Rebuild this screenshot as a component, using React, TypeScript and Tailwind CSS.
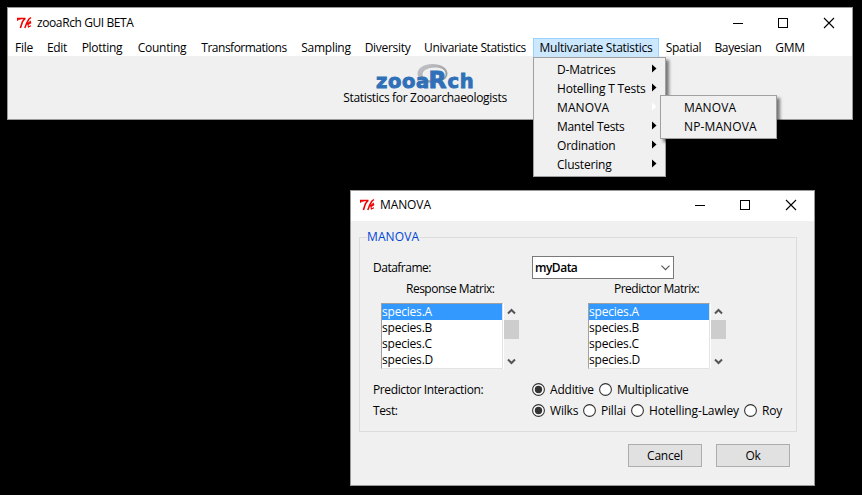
import { type ReactNode } from "react";

function TkIcon() {
  return (
    <svg width="16" height="14" viewBox="0 0 16 14" fill="none" stroke="#f00000" className="block shrink-0">
      <path d="M.6 4.800V2.400M0 2.500h8.500M1 3.200h2.500" strokeWidth="1.300" />
      <path d="M7.900 2.500L5.400 5.800L3.400 12" strokeWidth="1.600" />
      <path d="M13.900 1.500L11.800 3.300L9.800 6.800L7.800 12" strokeWidth="1.500" />
      <path d="M9.600 8.200L13.400 5.500L13.700 7L11 8.500L11.400 11L14 9.800" strokeWidth="1.100" />
    </svg>
  );
}

function Controls() {
  return (
    <svg width="102" height="12" viewBox="0 0 102 12" fill="none" stroke="#000" className="block shrink-0">
      <path d="M0 6.5h10" shapeRendering="crispEdges" />
      <path d="M45.5 1.5h9v9h-9z" shapeRendering="crispEdges" />
      <path d="M91 1l10 10M101 1l-10 10" strokeWidth="1.1" />
    </svg>
  );
}

function TitleBar({ title, className, titleClass }: { title: string; className: string; titleClass: string }) {
  return (
    <div className={`flex items-center justify-between bg-white pl-[9px] ${className}`}>
      <div className="flex items-center gap-[4px]">
        <TkIcon />
        <span className={titleClass}>{title}</span>
      </div>
      <Controls />
    </div>
  );
}

const menus = [
  { label: "File", width: "w-[32px]" },
  { label: "Edit", width: "w-[34px]" },
  { label: "Plotting", width: "w-[56px]" },
  { label: "Counting", width: "w-[64px]" },
  { label: "Transformations", width: "w-[100px] tracking-[-0.5px]" },
  { label: "Sampling", width: "w-[64px]" },
  { label: "Diversity", width: "w-[59px] tracking-[-0.3px]" },
  { label: "Univariate Statistics", width: "w-[116px] tracking-[-0.38px]" },
  { label: "Multivariate Statistics", width: "w-[126px]" },
  { label: "Spatial", width: "w-[49px]" },
  { label: "Bayesian", width: "w-[60px] tracking-[-0.35px]" },
  { label: "GMM", width: "w-[44px]" },
];

function Logo() {
  return (
    <svg width="100" height="26" viewBox="0 0 100 26" className="block overflow-visible">
      <defs>
        <linearGradient id="ring" x1="0" y1="0" x2="1" y2="1">
          <stop offset="0" stopColor="#c9cacc" />
          <stop offset="1" stopColor="#8c8d91" />
        </linearGradient>
      </defs>
      <path
        fillRule="evenodd"
        fill="url(#ring)"
        d="M57.5 1C66 1 72.500 5 72.500 10.500S66 20 57.500 20S42.500 16 42.500 10.500S49 1 57.500 1ZM60 4.500C52.500 4.500 47.500 7.500 47.500 11.500S52.500 17.500 60 17.500S70.500 15 70.500 11S67 4.500 60 4.500Z"
      />
      <text y="24.500" fill="#2f70b8" stroke="#2f70b8" strokeWidth="0.9" fontFamily="'DejaVu Sans', sans-serif" fontWeight="700" fontSize="19.500" letterSpacing="0.6">
        <tspan x="1">zooa</tspan>
        <tspan x="53.500" fontSize="23.500">R</tspan>
        <tspan x="72.500">ch</tspan>
      </text>
    </svg>
  );
}

function MainWindow() {
  return (
    <section className="absolute left-[7px] top-[7px] flex h-[113px] w-[846px] flex-col border border-[#999] bg-[#f0f0f0]">
      <TitleBar title="zooaRch GUI BETA" titleClass="tracking-[-0.4px]" className="h-[30px] pr-[17px]" />
      <nav className="flex h-[18px] shrink-0 bg-white tracking-[-0.28px]">
        {menus.map((m) => (
          <div
            key={m.label}
            className={`flex shrink-0 items-center justify-center ${m.width} ${
              m.label === "Multivariate Statistics" ? "h-[20px] border border-[#99d1ff] bg-[#cce8ff]" : "h-[20px]"
            }`}
          >
            {m.label}
          </div>
        ))}
      </nav>
      <div className="flex flex-col items-center pr-[10px] pt-[7px]">
        <Logo />
        <div className="mt-px h-4 leading-4 tracking-[-0.32px]">Statistics for Zooarchaeologists</div>
      </div>
    </section>
  );
}

const submenu = ["D-Matrices", "Hotelling T Tests", "MANOVA", "Mantel Tests", "Ordination", "Clustering"];

function Menus() {
  return (
    <>
      <div className="absolute left-[533px] top-[57px] flex h-[120px] w-[133px] flex-col border border-[#a0a0a0] bg-[#f0f0f0] pt-[2px] shadow-[3px_3px_3px_rgba(0,0,0,0.5)]">
        {submenu.map((s) => (
          <div key={s} className="flex h-[19px] items-center justify-between pl-[23px] pr-[8px]">
            <span className={s === "MANOVA" ? "tracking-[0.1px]" : s === "Mantel Tests" ? "tracking-[-0.3px]" : ""}>{s}</span>
            <svg width="5" height="9" viewBox="0 0 5 9" className="mb-[3px] block">
              <path d="M0 .5L4.500 4.500L0 8.500z" fill={s === "MANOVA" ? "#fff" : "#000"} />
            </svg>
          </div>
        ))}
      </div>
      <div className="absolute left-[660px] top-[95px] flex h-[44px] w-[117px] flex-col border border-[#a0a0a0] bg-[#f0f0f0] pl-[23px] pt-[2px] tracking-[0.12px] shadow-[3px_3px_3px_rgba(0,0,0,0.5)]">
        <div className="flex h-[19px] items-center">MANOVA</div>
        <div className="flex h-[19px] items-center">NP-MANOVA</div>
      </div>
    </>
  );
}

function Chevron({ up = false }: { up?: boolean }) {
  return (
    <svg width="9" height="7" viewBox="0 0 9 7" fill="none" stroke="#555" strokeWidth="2" className="block">
      <path d={up ? "M1 5.500L4.500 2L8 5.500" : "M1 1.500L4.500 5L8 1.500"} />
    </svg>
  );
}

function ListBox() {
  return (
    <div className="flex h-[66px]">
      <ul className="h-[66px] w-[122px] border-b border-l border-r border-t border-b-[#e3e3e3] border-l-[#a0a0a0] border-r-[#e3e3e3] border-t-[#a0a0a0] bg-white">
        {["A", "B", "C", "D"].map((k) => (
          <li key={k} className={`h-4 leading-[15px] ${k === "A" ? "bg-[#3399ff] text-white" : ""}`}>
            species.{k}
          </li>
        ))}
      </ul>
      <div className="w-px bg-white" />
      <div className="flex w-[15px] flex-col items-center justify-between pb-[4px] pt-[5px]">
        <Chevron up />
        <div className="mb-auto mt-[5px] h-[19px] w-[15px] shrink-0 bg-[#cdcdcd]" />
        <Chevron />
      </div>
    </div>
  );
}

function Radio({ label, checked = false, className }: { label: string; checked?: boolean; className: string }) {
  return (
    <label className={`flex shrink-0 items-center gap-[5px] ${className}`}>
      <svg width="13" height="13" viewBox="0 0 13 13" className="block shrink-0">
        <circle cx="6.500" cy="6.500" r="5.900" fill="#fff" stroke="#333" strokeWidth="1.100" />
        {checked && <circle cx="6.500" cy="6.500" r="3.700" fill="#333" />}
      </svg>
      <span>{label}</span>
    </label>
  );
}

function Row({ label, children }: { label: string; children: ReactNode }) {
  return (
    <div className="flex h-[21px] items-center">
      <div className="w-[159px] shrink-0 tracking-[-0.38px]">{label}</div>
      {children}
    </div>
  );
}

function Dialog() {
  return (
    <section className="absolute left-[350px] top-[190px] flex h-[296px] w-[465px] flex-col border border-[#999] bg-[#f0f0f0]">
      <TitleBar title="MANOVA" titleClass="tracking-[-0.1px]" className="h-[30px] shrink-0 pb-[2px] pr-[17px]" />
      <div className="ml-[8px] mt-[16px] flex h-[195px] w-[438px] shrink-0 flex-col border border-[#dcdcdc] pl-[13px]">
        <div className="-ml-[6px] -mt-[9px] h-4 w-[53px] bg-[#f0f0f0] leading-4 tracking-[0.1px] text-[#0046d5]">MANOVA</div>
        <div className="mt-[11px] flex h-[23px] items-center">
          <div className="w-[159px] tracking-[-0.5px]">Dataframe:</div>
          <div className="flex h-[23px] w-[142px] items-center justify-between border border-[#7a7a7a] bg-white pl-[2px] pr-[3px]">
            <span className="font-semibold tracking-[-0.5px]">myData</span>
            <svg width="9" height="6" viewBox="0 0 9 6" fill="none" stroke="#555" strokeWidth="1.200" className="block">
              <path d="M.5 .7L4.500 4.700L8.500 .7" />
            </svg>
          </div>
        </div>
        <div className="mt-[2px] flex h-4 leading-4 tracking-[-0.5px]">
          <div className="w-[208px] pl-[33px]">Response Matrix:</div>
          <div className="pl-[33px]">Predictor Matrix:</div>
        </div>
        <div className="mt-[6px] flex gap-[69px] pl-[8px]">
          <ListBox />
          <ListBox />
        </div>
        <div className="mt-[10px]">
          <Row label="Predictor Interaction:">
            <Radio label="Additive" checked className="w-[67px]" />
            <Radio label="Multiplicative" className="" />
          </Row>
          <Row label="Test:">
            <Radio label="Wilks" checked className="w-[51px]" />
            <Radio label="Pillai" className="w-[48px]" />
            <Radio label="Hotelling-Lawley" className="w-[113px] tracking-[-0.12px]" />
            <Radio label="Roy" className="" />
          </Row>
        </div>
      </div>
      <div className="mt-[12px] flex justify-end gap-[14px] pr-[24px]">
        {["Cancel", "Ok"].map((b) => (
          <button key={b} className="flex h-[23px] w-[74px] items-center justify-center border border-[#adadad] bg-[#e1e1e1]">
            {b}
          </button>
        ))}
      </div>
    </section>
  );
}

export default function App() {
  return (
    <main className="relative h-[495px] w-[862px] overflow-hidden whitespace-nowrap bg-black font-['Open_Sans','Noto_Sans',sans-serif] text-[12px] leading-4 tracking-[-0.2px] text-black">
      <MainWindow />
      <Dialog />
      <Menus />
    </main>
  );
}
